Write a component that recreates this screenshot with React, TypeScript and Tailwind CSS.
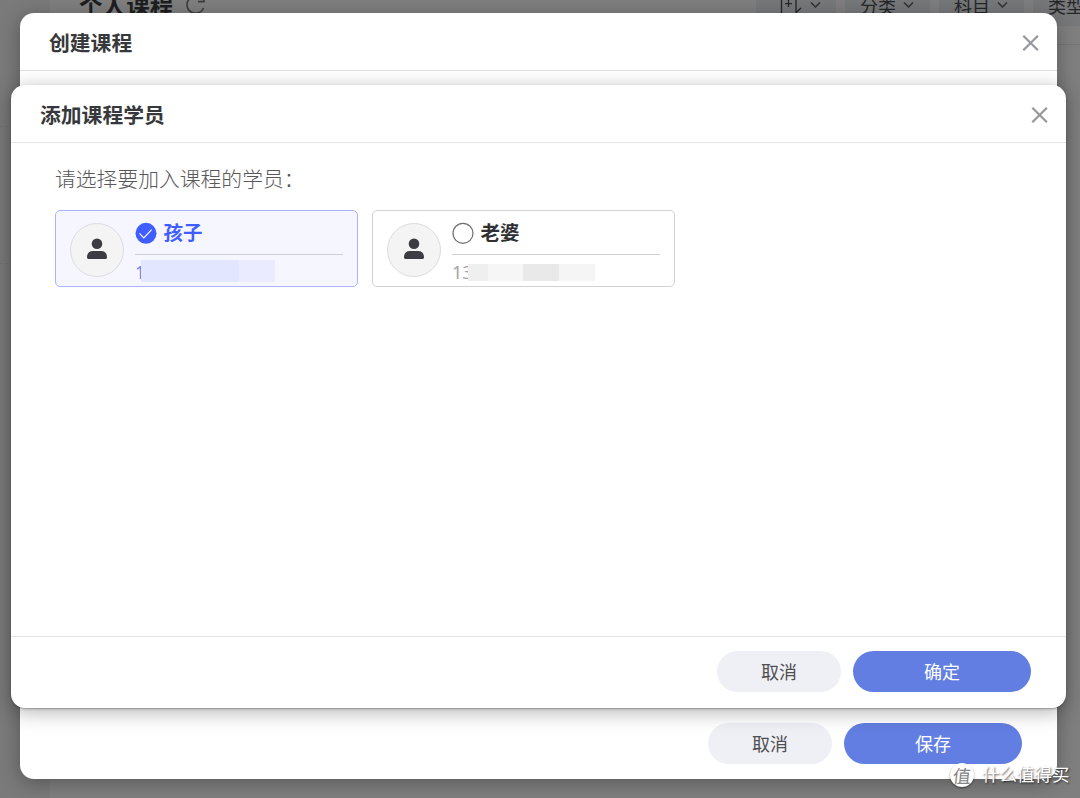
import React from 'react';

const filters = ['分类', '科目', '类型'];

function CloseIcon() {
  return (
    <svg width="18" height="18" viewBox="0 0 18 18" fill="none" stroke="#96989e" strokeWidth="2.3">
      <path d="M1.3 1.8 15.9 16.2M15.9 1.8 1.3 16.2" />
    </svg>
  );
}

function Chevron() {
  return (
    <svg width="12" height="8" viewBox="0 0 12 8" fill="none" stroke="#303133" strokeWidth="1.5">
      <path d="M1 2.5 5.5 7 10 2.5" />
    </svg>
  );
}

function Avatar() {
  return (
    <div className="flex h-[54px] w-[54px] shrink-0 items-center justify-center rounded-full border border-[#dcdcde] bg-[#f4f4f5] pb-0.5">
      <svg width="20" height="22" viewBox="0 0 20 22" fill="#3d3c42">
        <circle cx="10" cy="5.7" r="5.3" />
        <path d="M0 19.2C0 15.2 2.4 13 5.8 13h8.4c3.4 0 5.8 2.2 5.8 6.2 0 1.2-.6 1.8-1.7 1.8H1.7C.6 21 0 20.4 0 19.2Z" />
      </svg>
    </div>
  );
}

function Buttons({ confirm }: { confirm: string }) {
  return (
    <div className="flex gap-3 text-[18px] leading-none">
      <button className="h-[41px] w-[124px] rounded-full bg-[#eff0f5] pb-px text-[#4f4f51]">取消</button>
      <button className="h-[41px] w-[178px] rounded-full bg-[#627ee2] pb-px text-white">{confirm}</button>
    </div>
  );
}

function StudentCard({ name, phone, checked }: { name: string; phone: string; checked?: boolean }) {
  return (
    <div
      className={`flex h-[77px] w-[303px] rounded-[5px] border pt-3 pr-3.5 pl-3.5 ${
        checked ? 'border-[#a9b4fa] bg-[#f5f6ff]' : 'border-[#d2d2d2] bg-white'
      }`}
    >
      <Avatar />
      <div className="ml-[11px] flex-1">
        <div className="flex h-[32px] items-start gap-[6.5px] border-b border-[#cfcfd2]">
          {checked ? (
            <svg className="mt-[-1px]" width="22" height="22" viewBox="0 0 22 22" fill="none">
              <circle cx="11" cy="11.3" r="10.5" fill="#405eff" />
              <path d="m4.5 11.3 4.3 4.6 7.8-8.3" stroke="#fff" strokeWidth="1.1" />
            </svg>
          ) : (
            <svg className="mt-[-1px]" width="22" height="22" viewBox="0 0 22 22" fill="none">
              <circle cx="11" cy="11.3" r="10" stroke="#6f6f72" strokeWidth="1.2" />
            </svg>
          )}
          <span className={`mt-[-1.5px] text-[19.5px] leading-[20px] font-bold ${checked ? 'text-[#405eff]' : 'text-[#303133]'}`}>
            {name}
          </span>
        </div>
        {checked ? (
          <div className="mt-[5px] flex h-[22px] items-center">
            <span className="-mr-[5px] w-[10px] shrink-0 pt-px font-['Noto_Sans'] text-[18px] leading-[20px] text-[#7185fb]">{phone}</span>
            <span className="relative ml-px h-[22px] w-[98px] bg-[#e2e6fe]" />
            <span className="h-[22px] w-[36px] bg-[#eaebff]" />
          </div>
        ) : (
          <div className="mt-[6px] flex h-[22px] items-center">
            <span className="-mr-[4px] w-[20px] shrink-0 font-['Noto_Sans'] text-[18px] leading-[20px] text-[#a4a4a6]">{phone}</span>
            <span className="relative h-[17px] w-[20px] bg-[#efefef]" />
            <span className="h-[17px] w-[35px] bg-[#f6f6f6]" />
            <span className="h-[17px] w-[36px] bg-[#e9e9e9]" />
            <span className="h-[17px] w-[36px] bg-[#f5f5f5]" />
          </div>
        )}
      </div>
    </div>
  );
}

export default function App() {
  return (
    <div className="relative h-[798px] w-[1080px] overflow-hidden bg-[#7f7f7f] font-['Noto_Sans_CJK_SC',sans-serif]">
      {/* page under the mask */}
      <div className="flex h-full">
        <aside className="h-full w-[50px] shrink-0 bg-[#7a7a7a] pt-[126px]">
          <div className="h-[138px] border-y border-dashed border-[#727272]" />
        </aside>
        <div className="h-[45px] w-[1030px] border-b border-[#757575]">
          <div className="flex h-[26px] items-start">
            <span className="mt-[-9px] ml-[29px] w-[107px] shrink-0 text-[23.6px] leading-[28px] font-bold whitespace-nowrap text-[#1d1e20]">
              个人课程
            </span>
            <svg className="mt-[-7px] shrink-0" width="20" height="22" viewBox="0 0 20 22" fill="none" stroke="#3c3d3f" strokeWidth="1.6">
              <path d="M16 6A8.6 8.6 0 1 0 17.5 15M18 2v6.6h-6" />
            </svg>
            <div className="ml-[550px] flex shrink-0 gap-[9px] text-[18px] text-[#252628]">
              <div className="flex h-[26px] w-[80px] shrink-0 items-start bg-[#77787a] pl-6">
                <svg width="22" height="13" viewBox="0 0 22 13" fill="none" stroke="#252628" strokeWidth="1.3">
                  <path d="M1.5 0v13M5 3.7h7M8.5 0v7M16 0v12.5l5-4.5" />
                </svg>
                <span className="ml-2"><Chevron /></span>
              </div>
              {filters.map((f) => (
                <div key={f} className="flex h-[26px] w-[85px] shrink-0 items-start bg-[#77787a] pl-[15px]">
                  <span className="mt-[-8px] shrink-0 leading-[26px]">{f}</span>
                  <span className="ml-[7px]"><Chevron /></span>
                </div>
              ))}
            </div>
          </div>
        </div>
      </div>

      {/* 创建课程 */}
      <div className="absolute top-[13px] left-[20px] flex h-[766px] w-[1037px] flex-col justify-between rounded-[14px] bg-white shadow-[0_4px_20px_rgba(0,0,0,0.3)]">
        <div className="flex h-[58px] items-center justify-between border-b border-[#dfdfdf] pt-[2px] pr-[17px] pl-[29px]">
          <h2 className="text-[20.8px] leading-none font-bold text-[#37383b]">创建课程</h2>
          <CloseIcon />
        </div>
        <div className="flex h-[71px] items-center justify-end pr-[35px]">
          <Buttons confirm="保存" />
        </div>
      </div>

      {/* 添加课程学员 */}
      <div className="absolute top-[85px] left-[11px] flex h-[623px] w-[1055px] flex-col rounded-[14px] bg-white shadow-[0_4px_20px_rgba(0,0,0,0.3),0_1px_2px_rgba(0,0,0,0.3)]">
        <div className="flex h-[58px] items-center justify-between border-b border-[#e4e4e4] pt-[2px] pr-[17px] pl-[29px]">
          <h2 className="text-[20.8px] leading-none font-bold text-[#37383b]">添加课程学员</h2>
          <CloseIcon />
        </div>
        <div className="flex-1 px-11 pt-[22px]">
          <p className="text-[20.8px] leading-[26px] font-light text-[#58585a]">请选择要加入课程的学员：</p>
          <div className="mt-[19px] flex gap-[14px]">
            <StudentCard name="孩子" phone="1" checked />
            <StudentCard name="老婆" phone="13" />
          </div>
        </div>
        <div className="flex h-[72px] items-center justify-end border-t border-[#e4e4e4] pr-[35px] pb-[2px]">
          <Buttons confirm="确定" />
        </div>
      </div>

      {/* watermark */}
      <div className="absolute top-[763px] left-[950px] flex items-center gap-2 text-white">
        <span className="flex h-[24px] w-[24px] items-center justify-center rounded-full bg-white text-[18px] leading-none text-[#858585] shadow-[0_1px_2px_rgba(0,0,0,0.5)]">
          <span className="-skew-x-6">值</span>
        </span>
        <span className="-mt-0.5 text-[17.5px] leading-[24px] whitespace-nowrap [text-shadow:1px_1px_2px_rgba(0,0,0,0.65)]">什么值得买</span>
      </div>
    </div>
  );
}
